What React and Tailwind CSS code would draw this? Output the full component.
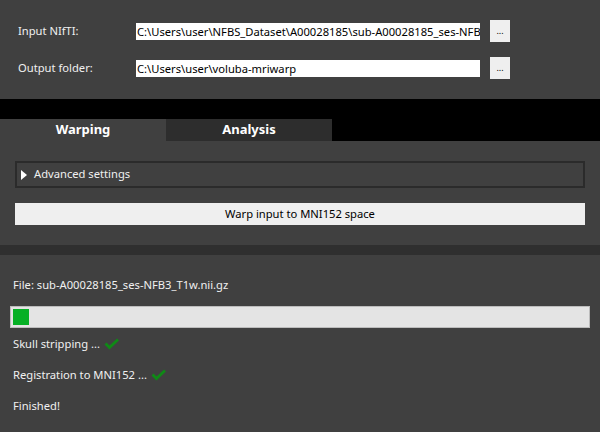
import React from 'react';

const font = "font-['Segoe_UI','Noto_Sans','Open_Sans',sans-serif]";

function Check() {
  return (
    <svg width="16" height="12" viewBox="0 0 16 12" className="ml-[4px] inline-block">
      <path d="M1.5 5.5 L5.5 9.5 L14 1.5" fill="none" stroke="#0f8a16" strokeWidth="2.8" />
    </svg>
  );
}

function PathRow({ label, value }) {
  return (
    <div className="flex items-center h-[22px]">
      <div className="w-[136px] pl-[18px] text-[11.2px] text-[#f0f0f0]">{label}</div>
      <div className="w-[344px] h-[17px] bg-white text-black text-[11.2px] leading-[17px] pl-[1px] overflow-hidden whitespace-nowrap">
        {value}
      </div>
      <button className="ml-[10px] w-[20px] h-[22px] bg-[#efefef] text-black text-[9px] leading-[14px] flex items-center justify-center overflow-hidden">
        ...
      </button>
    </div>
  );
}

export default function App() {
  return (
    <div className={`w-[600px] h-[432px] bg-[#404040] overflow-hidden ${font}`}>
      <div className="h-[99px] pt-[20px] flex flex-col gap-[15px]">
        <PathRow
          label="Input NIfTI:"
          value="C:\Users\user\NFBS_Dataset\A00028185\sub-A00028185_ses-NFB3_T1w.nii.gz"
        />
        <PathRow label="Output folder:" value="C:\Users\user\voluba-mriwarp" />
      </div>

      <div className="h-[42px] bg-black flex items-end">
        <div className="w-[166px] h-[22px] bg-[#404040] text-white font-bold text-[13px] flex items-center justify-center">
          Warping
        </div>
        <div className="w-[166px] h-[22px] bg-[#2d2d2d] text-white font-bold text-[13px] flex items-center justify-center">
          Analysis
        </div>
      </div>

      <div className="h-[104px] px-[15px] pt-[20px]">
        <div className="h-[27px] border-2 border-[#2b2b2b] flex items-center pl-[4px] w-[570px]">
          <svg width="6" height="10" viewBox="0 0 6 10" className="mr-[7px]">
            <path d="M0 0 L6 5 L0 10 Z" fill="#ffffff" />
          </svg>
          <span className="text-[11.2px] text-[#f0f0f0]">Advanced settings</span>
        </div>
        <button className="mt-[15px] w-[570px] h-[22px] bg-[#efefef] text-black text-[11.2px] flex items-center justify-center">
          Warp input to MNI152 space
        </button>
      </div>

      <div className="h-[10px] bg-[#2f2f2f]" />

      <div className="pt-[22px] text-[11.2px] text-[#f0f0f0]">
        <div className="pl-[13px] h-[16px] leading-[16px]">File: sub-A00028185_ses-NFB3_T1w.nii.gz</div>
        <div className="mt-[13px] ml-[10px] w-[580px] h-[22px] bg-[#e4e4e4] border border-[#bcbcbc] p-[2px]">
          <div className="w-[16px] h-full bg-[#06b025]" />
        </div>
        <div className="mt-[8px] pl-[13px] h-[16px] leading-[16px] flex items-center">
          Skull stripping ...<Check />
        </div>
        <div className="mt-[15px] pl-[13px] h-[16px] leading-[16px] flex items-center">
          Registration to MNI152 ...<Check />
        </div>
        <div className="mt-[15px] pl-[13px] h-[16px] leading-[16px]">Finished!</div>
      </div>
    </div>
  );
}
